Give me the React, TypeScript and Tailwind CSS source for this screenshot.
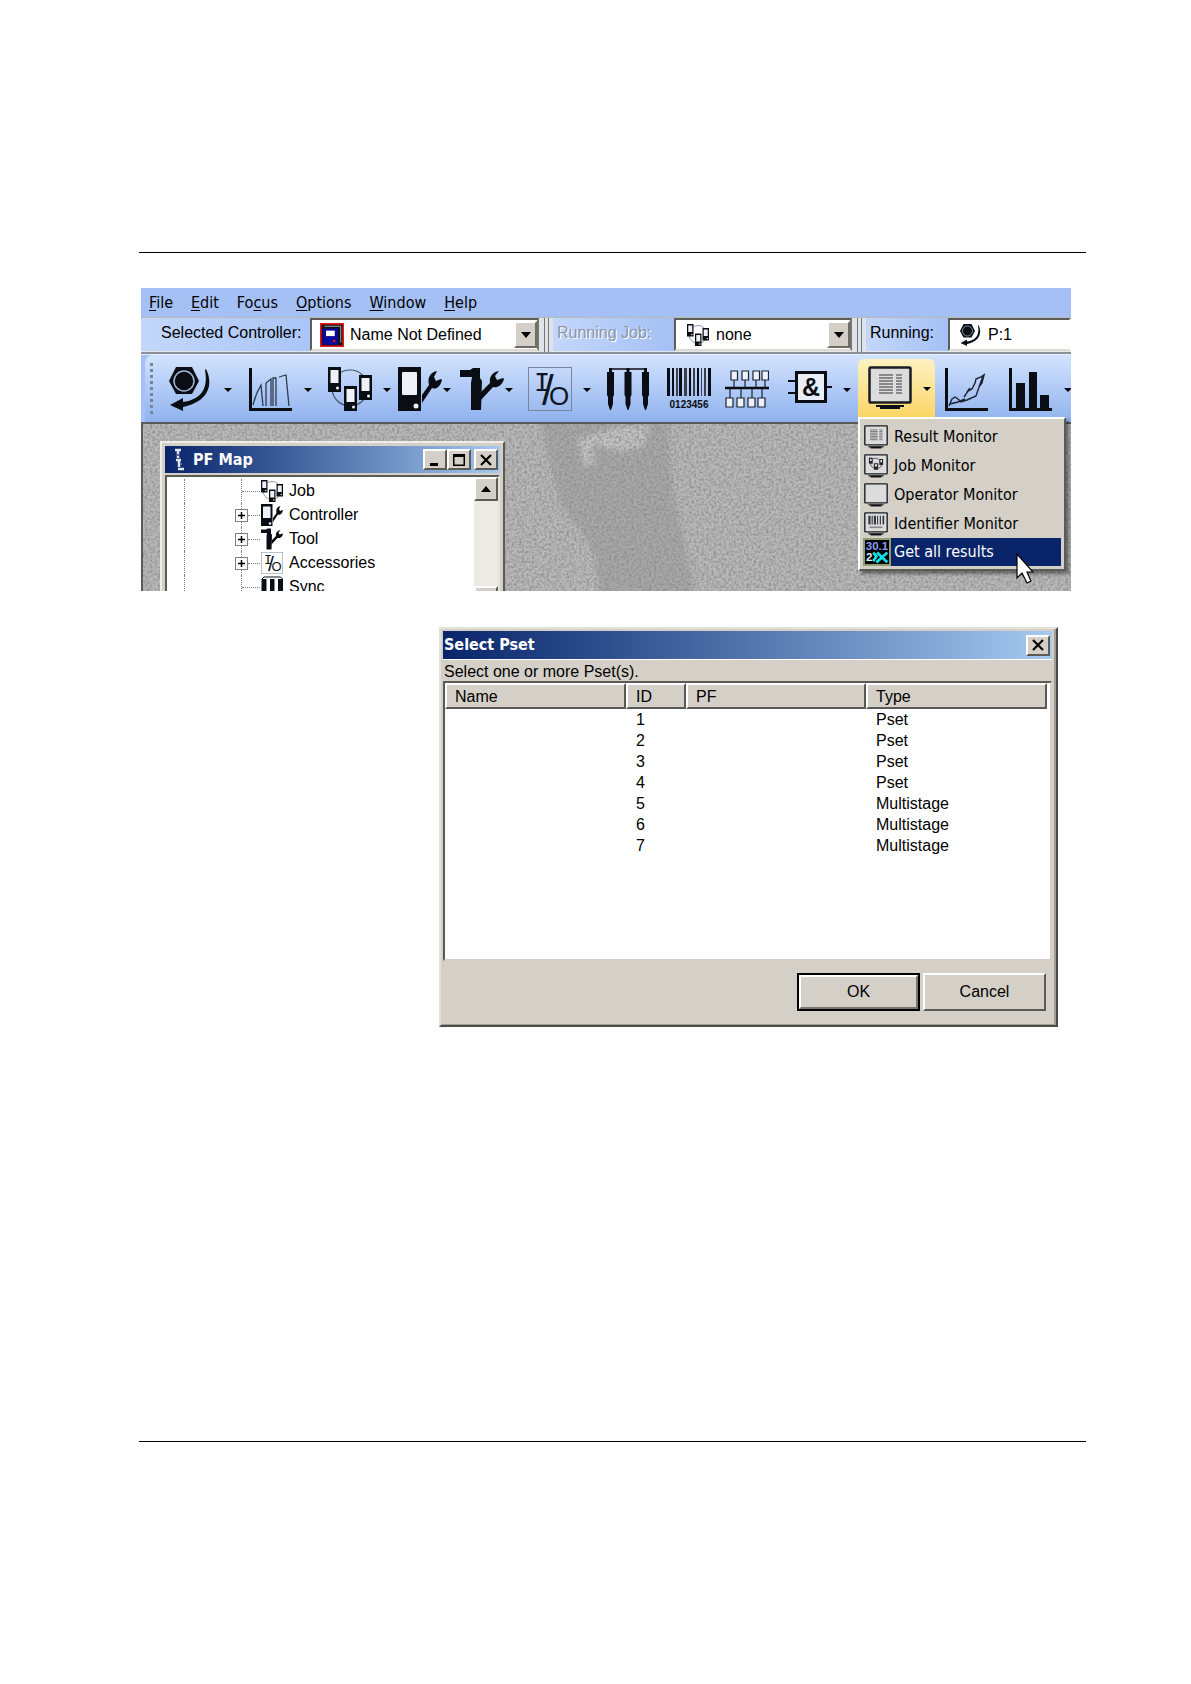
import type { ReactNode } from "react";

const SANS = "font-['Liberation_Sans',Arial,sans-serif]";
const UI = "font-['DejaVu_Sans_Condensed','Noto_Sans',sans-serif]";

interface IconProps {
  className?: string;
}

interface SvgProps extends IconProps {
  children: ReactNode;
}

function Svg({ className = "w-11 h-11", children }: SvgProps) {
  return (
    <svg viewBox="0 0 44 44" className={`shrink-0 ${className}`} aria-hidden="true">
      {children}
    </svg>
  );
}

function NutIcon({ className }: IconProps) {
  return (
    <Svg className={className}>
      <path d="M0 14 7 0h16l7 14-7 13H7z" fill="#0a0e14" />
      <circle cx="15" cy="14" r="10" fill="none" stroke="#9fb4d4" strokeWidth="1.5" />
      <path d="M37 2C45 18 39 35 14 40v4L1 38l13-7v4C34 32 39 20 36 3z" fill="#0a0e14" />
    </Svg>
  );
}

function CurvesIcon({ className }: IconProps) {
  return (
    <Svg className={className}>
      <path d="M1.5 1v41M0 42.500h43" stroke="#0a0e14" strokeWidth="3" fill="none" />
      <path
        d="M4 38C6 30 9 23 12 18l2 21M17 39V16l5-4v27M24 39V11h3v28M30 10l7-2 3 31"
        fill="none"
        stroke="#2d3a50"
        strokeWidth="1.300"
      />
    </Svg>
  );
}

function Device({ x, y }: { x: number; y: number }) {
  return (
    <g transform={`translate(${x} ${y})`}>
      <rect width="13" height="25" fill="#0a0e14" />
      <rect x="2.500" y="3" width="8" height="13" fill="#eef2f8" />
      <circle cx="9.500" cy="21" r="1.500" fill="#eef2f8" />
    </g>
  );
}

function JobIcon({ className }: IconProps) {
  return (
    <Svg className={className}>
      <ellipse cx="22" cy="21" rx="18" ry="18" fill="none" stroke="#46536a" strokeWidth="1.200" />
      <Device x={0} y={0} />
      <Device x={31} y={8} />
      <Device x={16} y={19} />
    </Svg>
  );
}

function ControllerIcon({ className }: IconProps) {
  return (
    <Svg className={className}>
      <rect width="23" height="44" fill="#0a0e14" />
      <rect x="4" y="5" width="15" height="23" rx="1" fill="#eef2f8" />
      <circle cx="18" cy="39" r="2.500" fill="#eef2f8" />
      <path d="M24 28 31 18C29 10 33 5 39 4l-3 6 2 4 5-2 1 1C42 20 38 23 34 21L24 36z" fill="#0a0e14" />
    </Svg>
  );
}

function ToolIcon({ className }: IconProps) {
  return (
    <Svg className={className}>
      <path d="M0 3h10l3-2h7v10l2 3-1 29H11V16l1-6H0z" fill="#0a0e14" />
      <path d="m21 25 9-9C29 9 33 5 39 4l-4 5 2 4 6-2 1 1C42 19 37 21 33 20L21 33z" fill="#0a0e14" />
    </Svg>
  );
}

function IoIcon({ className }: IconProps) {
  return (
    <Svg className={className}>
      <rect x=".5" y=".5" width="43" height="43" fill="none" stroke="#7b8597" />
      <g fill="#101620">
        <text x="6" y="24" fontFamily="Liberation Mono" fontSize="27" textAnchor="start">
          I
        </text>
        <text x="14" y="38" fontFamily="Liberation Sans" fontSize="42">
          /
        </text>
        <text x="31" y="38" fontFamily="Liberation Sans" fontSize="26" textAnchor="middle">
          O
        </text>
      </g>
    </Svg>
  );
}

function SyncIcon({ className }: IconProps) {
  return (
    <Svg className={className}>
      <path d="M4 2h36" stroke="#0a0e14" strokeWidth="1.500" />
      {[0, 17.5, 35].map((x) => (
        <path key={x} d={`M${x + 3} 1h3v4h2v23l-1 2v7l-2 6h-1l-2-6v-7l-1-2V5h2z`} fill="#0a0e14" />
      ))}
    </Svg>
  );
}

function SyncSmallIcon({ className }: IconProps) {
  return (
    <Svg className={className}>
      <path d="M2 44V6l4-4h33l4 4v38" fill="none" stroke="#0a0e14" strokeWidth="2" />
      <path d="M2 6h9v38H2zM18 6h9v38h-9zM34 6h9v38h-9z" fill="#0a0e14" />
    </Svg>
  );
}

function BarcodeIcon({ className }: IconProps) {
  return (
    <Svg className={className}>
      <path d="M0 1h3v28H0zM5 1h2v28H5zM12 1h3v28h-3zM22 1h2v28h-2zM30 1h2v28h-2zM41 1h3v28h-3z" fill="#0a0e14" />
      <path d="M9 1h2v28H9zM17 1h3v28h-3zM26 1h2v28h-2zM34 1h1v28h-1zM37 1h2v28h-2z" fill="#39404c" />
      <text x="22" y="41" textAnchor="middle" fontFamily="Liberation Sans" fontWeight="bold" fontSize="10" fill="#0a0e14">
        0123456
      </text>
    </Svg>
  );
}

function LineIcon({ className }: IconProps) {
  return (
    <Svg className={className}>
      <path d="M0 21h44" stroke="#0a0e14" strokeWidth="2.500" />
      <g fill="#eef2f8" stroke="#1c2430" strokeWidth="1.200">
        {[6, 17, 28, 37].map((x) => (
          <path key={x} d={`M${x} 4h6.500v9H${x}zM${x + 3} 13v8`} />
        ))}
        {[1, 12, 23, 33].map((x) => (
          <path key={x} d={`M${x} 31h7v9H${x}zM${x + 4} 31V22`} />
        ))}
      </g>
    </Svg>
  );
}

function GateIcon({ className }: IconProps) {
  return (
    <Svg className={className}>
      <path d="M0 14h8M0 26h8M38 20h6" stroke="#0a0e14" strokeWidth="2" />
      <rect x="8.500" y="5.500" width="29" height="29" fill="#e9eef6" stroke="#0a0e14" strokeWidth="3" />
      <text x="23" y="29" textAnchor="middle" fontFamily="Liberation Sans" fontWeight="bold" fontSize="25" fill="#0a0e14">
        &amp;
      </text>
    </Svg>
  );
}

function Monitor({ className, children }: { className?: string; children?: ReactNode }) {
  return (
    <Svg className={className}>
      <rect x="1.500" y="1.500" width="41" height="35" rx="1" fill="#dcdcdc" stroke="#1a1d22" strokeWidth="2.500" />
      {children}
      <path d="M8 39h28v2H8z" fill="#0a0e14" />
      <path d="M12 40h20v3H12z" fill="#0a0e14" />
    </Svg>
  );
}

function ResultMonitorIcon({ className }: IconProps) {
  return (
    <Monitor className={className}>
      <path
        d="M11 9h14M11 12h14M11 15h14M11 18h14M11 21h14M11 24h14M11 27h14M28 9h6M28 12h6M28 15h6M28 18h6M28 21h6M28 24h6M28 27h6"
        stroke="#6a6d72"
        strokeWidth="1.600"
      />
    </Monitor>
  );
}

function JobMonitorIcon({ className }: IconProps) {
  return (
    <Monitor className={className}>
      <path d="M9 7h7v11H9zM28 9h7v11h-7zM18 17h8v12h-8z" fill="#22262c" />
      <path d="M11 9h3v4h-3zM30 11h3v4h-3zM20 19h4v4h-4z" fill="#e6e6e6" />
      <path d="M12 18c0 4 2 6 6 7M32 20c0 3-2 5-6 6M16 9c5-2 8-1 12 1" fill="none" stroke="#444" strokeWidth="1.500" />
    </Monitor>
  );
}

function IdentifierMonitorIcon({ className }: IconProps) {
  return (
    <Monitor className={className}>
      <path d="M8 7h4v16H8zM14 7h2v16h-2zM18 7h4v16h-4zM24 7h2v16h-2zM29 7h2v16h-2zM34 7h3v16h-3z" fill="#33373d" />
      <path d="M10 28h24" stroke="#8a8a8a" strokeWidth="3" />
    </Monitor>
  );
}

function GetResultsIcon({ className }: IconProps) {
  return (
    <Svg className={className}>
      <rect width="44" height="44" fill="#000" />
      <g fontFamily="Liberation Sans" fontWeight="bold" fontSize="21">
        <text x="22" y="19" fill="#8f9cff" textAnchor="middle">
          30.1
        </text>
        <text x="2" y="39" fill="#e8ecff">
          2
        </text>
      </g>
      <path d="m15 23 6 7-6 9M22 23l19 18M41 23 21 41" fill="none" stroke="#10e0e8" strokeWidth="5" />
    </Svg>
  );
}

function TraceIcon({ className }: IconProps) {
  return (
    <Svg className={className}>
      <path d="M1.500 1v41M0 42.500h43" stroke="#0a0e14" strokeWidth="3" fill="none" />
      <path
        d="m4 39 3-7 3-2 3 2 3 3 6-2 9-4 3-9 3-4 2-8M19 30l4-6 4-2 3-6 1-4 5-2 4-3M34 20l4-11M22 25l3-4M5 37l8-2 7-3"
        fill="none"
        stroke="#1c2430"
        strokeWidth="1.400"
      />
    </Svg>
  );
}

function BarsIcon({ className }: IconProps) {
  return (
    <Svg className={className}>
      <path d="M1.500 1v41M0 42.500h43" stroke="#0a0e14" strokeWidth="3" fill="none" />
      <path d="M7 16h9v26H7zM20 5h8v37h-8zM31 28h9v14h-9z" fill="#0a0e14" />
    </Svg>
  );
}

function RedDeviceIcon() {
  return (
    <Svg className="w-6 h-6">
      <rect x="1.500" y="1.500" width="41" height="41" fill="#111" stroke="#e3161b" strokeWidth="3" />
      <path d="M8 6h30v30" fill="none" stroke="#bfc3cc" strokeWidth="1.500" />
      <rect x="5" y="10" width="28" height="30" fill="#0a0a9c" />
      <rect x="11" y="14" width="16" height="10" fill="#fff" />
      <circle cx="26" cy="33" r="2.500" fill="#e3161b" />
    </Svg>
  );
}

function Caret({ className }: IconProps) {
  return <span className={`mt-[3px] w-0 h-0 border-x-4 border-x-transparent border-t-4 border-t-black ${className}`} />;
}

const menus = [
  { before: "", key: "F", after: "ile" },
  { before: "", key: "E", after: "dit" },
  { before: "Fo", key: "c", after: "us" },
  { before: "", key: "O", after: "ptions" },
  { before: "", key: "W", after: "indow" },
  { before: "", key: "H", after: "elp" },
];

interface ComboProps {
  id: string;
  value: string;
  icon: ReactNode;
  className: string;
  arrow?: boolean;
}

function Combo({ id, value, icon, className, arrow = true }: ComboProps) {
  return (
    <div
      className={`flex h-[33px] items-center bg-white border-2 border-t-[#5c5c58] border-l-[#5c5c58] border-b-[#dedbd3] pl-2 ${className}`}
    >
      {icon}
      <select id={id} className="appearance-none flex-1 min-w-0 h-full pl-[6px] bg-transparent text-black outline-none">
        <option>{value}</option>
      </select>
      {arrow && (
        <span className="flex w-[23px] h-[27px] shrink-0 items-center justify-center bg-[#d4d0c8] border-2 border-t-white border-l-white border-b-[#6e6b64] border-r-[#6e6b64]">
          <span className="w-0 h-0 border-x-[5px] border-x-transparent border-t-[6px] border-t-black" />
        </span>
      )}
    </div>
  );
}

function Splitter() {
  return (
    <span className="flex h-[34px] w-[14px] shrink-0 justify-center gap-[3px] bg-[#dfe3ea]">
      <span className="w-px bg-[#77756f]" />
      <span className="w-px bg-[#77756f]" />
    </span>
  );
}

interface Tool {
  name: string;
  icon: ReactNode;
  width: string;
  caret?: string;
}

const tools: Tool[] = [
  { name: "Pset", icon: <NutIcon />, width: "w-20", caret: "ml-[11px]" },
  { name: "Curves", icon: <CurvesIcon />, width: "w-[79px]", caret: "ml-[11px]" },
  { name: "Job", icon: <JobIcon />, width: "w-[70px]", caret: "ml-[11px]" },
  { name: "Controller", icon: <ControllerIcon />, width: "w-[62px]", caret: "ml-[1px]" },
  { name: "Tool", icon: <ToolIcon />, width: "w-[68px]", caret: "ml-[1px]" },
  { name: "Accessories", icon: <IoIcon />, width: "w-[78px]", caret: "ml-[11px]" },
  { name: "Sync", icon: <SyncIcon />, width: "w-[61px]" },
  { name: "Identifier", icon: <BarcodeIcon />, width: "w-[58px]" },
  { name: "Line", icon: <LineIcon />, width: "w-[63px]" },
  { name: "Logic", icon: <GateIcon />, width: "w-20", caret: "ml-[11px]" },
];

const statTools: Tool[] = [
  { name: "Trace", icon: <TraceIcon />, width: "w-16" },
  { name: "Statistics", icon: <BarsIcon />, width: "w-[76px]", caret: "ml-[11px]" },
];

function ToolButton({ tool }: { tool: Tool }) {
  return (
    <button type="button" aria-label={tool.name} className={`flex h-full shrink-0 items-center pl-[10px] ${tool.width}`}>
      {tool.icon}
      {tool.caret && <Caret className={tool.caret} />}
    </button>
  );
}

const monitorItems = [
  { label: "Result Monitor", icon: <ResultMonitorIcon className="w-6 h-6" /> },
  { label: "Job Monitor", icon: <JobMonitorIcon className="w-6 h-6" /> },
  { label: "Operator Monitor", icon: <Monitor className="w-6 h-6" /> },
  { label: "Identifier Monitor", icon: <IdentifierMonitorIcon className="w-6 h-6" /> },
];

function MonitorMenu() {
  return (
    <div
      className={`absolute left-0 top-[62px] z-10 w-[208px] py-[3px] px-[3px] bg-[#d4d0c8] border-2 border-t-white border-l-white border-b-[#5c5a55] border-r-[#5c5a55] shadow-[3px_3px_3px_rgba(0,0,0,0.4)] text-[16px] ${UI}`}
    >
      {monitorItems.map((item) => (
        <button key={item.label} type="button" className="flex h-[29px] w-full items-center pl-px gap-[6px] whitespace-nowrap">
          {item.icon}
          {item.label}
        </button>
      ))}
      <button type="button" className="flex h-7 w-full items-center whitespace-nowrap bg-[#0a246a] text-white">
        <span className="flex h-full w-7 shrink-0 items-center justify-center bg-[#8f9f72]">
          <GetResultsIcon className="w-6 h-6" />
        </span>
        <span className="pl-[3px]">Get all results</span>
      </button>
      {/* Mouse pointer */}
      <svg viewBox="0 0 18 32" className="absolute left-[156px] top-[134px] w-[18px] h-8" aria-hidden="true">
        <path d="M1 1v24l5-5 5 10 4-2-4-9h6z" fill="#fff" stroke="#000" strokeWidth="1.200" />
      </svg>
    </div>
  );
}

function TitleButton({ label, children }: { label: string; children: ReactNode }) {
  return (
    <button
      type="button"
      aria-label={label}
      className="flex w-6 h-[21px] items-center justify-center bg-[#d4d0c8] border-2 border-t-white border-l-white border-b-[#5c5a55] border-r-[#5c5a55]"
    >
      <svg viewBox="0 0 16 14" className="w-4 h-[14px]" aria-hidden="true">
        {children}
      </svg>
    </button>
  );
}

function CloseGlyph() {
  return <path d="m3 2 10 10M13 2 3 12" stroke="#000" strokeWidth="2.200" fill="none" />;
}

const tree = [
  { label: "Job", icon: <JobIcon className="w-6 h-[22px]" />, expandable: false },
  { label: "Controller", icon: <ControllerIcon className="w-6 h-[22px]" />, expandable: true },
  { label: "Tool", icon: <ToolIcon className="w-6 h-[22px]" />, expandable: true },
  { label: "Accessories", icon: <IoIcon className="w-6 h-[22px]" />, expandable: true },
  { label: "Sync", icon: <SyncSmallIcon className="w-6 h-[22px]" />, expandable: false },
];

function TreeRow({ row }: { row: (typeof tree)[number] }) {
  return (
    <li className="flex h-6 items-center">
      <span className="w-[18px] h-6 shrink-0 border-r border-dotted border-[#808080]" />
      <span className="flex w-[75px] h-6 shrink-0 items-center">
        <span className="w-[57px] h-full shrink-0 border-r border-dotted border-[#808080]" />
        {row.expandable && (
          <button
            type="button"
            aria-label={`Expand ${row.label}`}
            className="-ml-[7px] flex w-[13px] h-[13px] shrink-0 items-center justify-center border border-[#808080] bg-white"
          >
            <svg viewBox="0 0 9 9" className="w-[9px] h-[9px]" aria-hidden="true">
              <path d="M4.500 1v7M1 4.500h7" stroke="#000" strokeWidth="1.500" />
            </svg>
          </button>
        )}
        <span className="flex-1 border-t border-dotted border-[#808080]" />
      </span>
      {row.icon}
      <span className="pl-[5px]">{row.label}</span>
    </li>
  );
}

function PfMap() {
  return (
    <section className="relative ml-[17px] mt-[17px] w-[345px] h-[170px] p-[3px] bg-[#d4d0c8] border-2 border-t-[#efede8] border-l-[#efede8] border-r-[#5c5a55]">
      <header className="flex h-[27px] items-center pl-2 pr-[2px] bg-linear-to-r from-[#0a246a] to-[#a6caf0]">
        <svg viewBox="0 0 12 24" className="w-3 h-6" aria-hidden="true">
          <path d="M2 2h6M5 3v7M3 12h5M6 13v6M5 21h6" stroke="#dfe3ee" strokeWidth="2.500" fill="none" />
          <path d="M4 6h2v2H4zM7 15h2v2H7z" fill="#6f6690" />
        </svg>
        <h2 className={`flex-1 pl-2 text-[16px] font-bold text-white ${UI}`}>PF Map</h2>
        <TitleButton label="Minimize">
          <path d="M3 10h8v3H3z" />
        </TitleButton>
        <TitleButton label="Maximize">
          <path d="M2 1h12v12H2zM3.500 4v7.500h9V4z" fillRule="evenodd" />
        </TitleButton>
        <span className="w-[3px]" />
        <TitleButton label="Close">
          <CloseGlyph />
        </TitleButton>
      </header>
      <div className="mt-[2px] flex h-[140px] bg-white border-2 border-t-[#5c5a55] border-l-[#5c5a55] border-r-[#e6e3dc]">
        <ul className={`flex-1 pt-[2px] text-[16px] ${SANS}`}>
          {tree.map((row) => (
            <TreeRow key={row.label} row={row} />
          ))}
        </ul>
        <div className="flex w-6 flex-col bg-[#eceae5]">
          <button
            type="button"
            aria-label="Scroll up"
            className="flex h-6 items-center justify-center bg-[#d4d0c8] border-2 border-t-white border-l-white border-b-[#5c5a55] border-r-[#5c5a55]"
          >
            <span className="w-0 h-0 border-x-[5px] border-x-transparent border-b-[6px] border-b-black" />
          </button>
          <span className="mt-[85px] h-6 bg-[#d4d0c8] border-2 border-t-white border-l-white border-r-[#5c5a55]" />
        </div>
      </div>
    </section>
  );
}

function Backdrop() {
  return (
    <svg className="absolute inset-0 w-full h-full" viewBox="0 0 930 169" preserveAspectRatio="xMinYMin slice" aria-hidden="true">
      <filter id="grain" x="0" y="0" width="100%" height="100%">
        <feTurbulence type="fractalNoise" baseFrequency="0.4" numOctaves="2" seed="4" />
        <feColorMatrix values="0 0 0 0 0.250  0 0 0 0 0.250  0 0 0 0 0.250  1.900 0 0 0 -0.700" />
      </filter>
      <filter id="soften">
        <feGaussianBlur stdDeviation="2.500" />
      </filter>
      <rect width="930" height="169" fill="#b9b9b9" />
      <g filter="url(#soften)">
        <path d="M396-8h130l4 68 25 120H455L440 110 418 80z" fill="#a8a8a8" />
        <path d="m436 15 40-12 32-3-6 22-24 6-28-8 3 20-12 2z" fill="#c4c4c4" />
        <path d="m438 105 14 28 6 46h-26z" fill="#bbbbbb" />
      </g>
      <rect width="930" height="169" filter="url(#grain)" />
    </svg>
  );
}

function ToolsNetWindow() {
  return (
    <section className="ml-[2px] mr-[15px] mt-[35px] overflow-hidden">
      <nav className={`flex h-[29px] items-center gap-[18px] pl-2 bg-[#a4c0f5] text-[16px] ${UI}`}>
        {menus.map((menu) => (
          <button key={menu.key} type="button">
            {menu.before}
            <u className="underline-offset-2">{menu.key}</u>
            {menu.after}
          </button>
        ))}
      </nav>

      <div className={`flex h-[37px] bg-[#e4e6ea] border-t border-t-[#b9b8b4] border-b-2 border-b-[#8b8f99] text-[16px] ${SANS}`}>
        <label htmlFor="controller" className="w-[169px] h-[33px] shrink-0 pl-5 leading-[30px] bg-linear-to-r from-[#c3d7fa] to-[#a9c5f7]">
          Selected Controller:
        </label>
        <Combo
          id="controller"
          value="Name Not Defined"
          icon={<RedDeviceIcon />}
          className="w-[229px] shrink-0 border-r-[#77756f]"
        />
        <Splitter />
        <label
          htmlFor="job"
          className="w-[121px] h-[33px] shrink-0 pl-1 leading-[30px] text-[#8d96a8] [text-shadow:1px_1px_0_#fff] bg-linear-to-r from-[#c3d7fa] to-[#a4c0f5]"
        >
          Running Job:
        </label>
        <Combo
          id="job"
          value="none"
          icon={<JobIcon className="w-6 h-[22px] ml-[2px]" />}
          className="w-[178px] shrink-0 border-r-[#77756f]"
        />
        <Splitter />
        <label htmlFor="running" className="w-[82px] h-[33px] shrink-0 pl-1 leading-[30px] bg-linear-to-r from-[#c3d7fa] to-[#a4c0f5]">
          Running:
        </label>
        <Combo
          id="running"
          value="P:1"
          icon={<NutIcon className="w-[22px] h-[22px] ml-[2px]" />}
          className="flex-1 min-w-[123px] border-r-white"
          arrow={false}
        />
      </div>

      <div className="h-[68px] pl-1 bg-[#a4c0f5] border-t border-t-[#e8eefb]">
        <div className="flex h-[67px] rounded-tl-lg bg-linear-to-b from-[#d3e3fd] to-[#8fb2ee]">
          <span className="my-2 ml-[5px] mr-[5px] w-1 shrink-0 border-l-[3px] border-dotted border-[#76849f]" />
          {tools.map((tool) => (
            <ToolButton key={tool.name} tool={tool} />
          ))}
          <div className="relative w-[77px] shrink-0">
            <button
              type="button"
              aria-label="Monitor"
              aria-expanded="true"
              className="mt-1 flex h-[63px] w-full items-center rounded-t-md pl-[10px] pb-[6px] bg-linear-to-b from-[#fdf1c0] to-[#fcd35a]"
            >
              <ResultMonitorIcon />
              <Caret className="ml-[11px]" />
            </button>
            <MonitorMenu />
          </div>
          {statTools.map((tool) => (
            <ToolButton key={tool.name} tool={tool} />
          ))}
        </div>
      </div>

      <div className="relative h-[169px] overflow-hidden border-t-2 border-l-2 border-[#5a5a5a]">
        <Backdrop />
        <PfMap />
      </div>
    </section>
  );
}

const psets = [
  { id: 1, type: "Pset" },
  { id: 2, type: "Pset" },
  { id: 3, type: "Pset" },
  { id: 4, type: "Pset" },
  { id: 5, type: "Multistage" },
  { id: 6, type: "Multistage" },
  { id: 7, type: "Multistage" },
];

const columns = [
  { label: "Name", width: "w-[181px]" },
  { label: "ID", width: "w-[60px]" },
  { label: "PF", width: "w-[180px]" },
  { label: "Type", width: "" },
];

function SelectPset() {
  return (
    <section
      className={`ml-[300px] mr-7 mt-9 bg-[#d4d0c8] border-2 border-t-[#e4e1da] border-l-[#e4e1da] border-b-[#4d4b47] border-r-[#4d4b47] text-[16px] ${SANS}`}
    >
      <div className="pl-[2px] pr-[2px] pt-[2px] pb-[13px] border-r-2 border-b border-[#a09d96]">
        <header className="flex h-7 items-center justify-between pl-px pr-[2px] bg-linear-to-r from-[#0a246a] to-[#a6caf0]">
          <h2 className={`text-[16px] font-bold text-white ${UI}`}>Select Pset</h2>
          <TitleButton label="Close">
            <CloseGlyph />
          </TitleButton>
        </header>
        <p className="h-[22px] pl-px leading-6 border-t border-t-white">Select one or more Pset(s).</p>
        <div className="h-[280px] bg-white border-2 border-t-[#5c5a55] border-l-[#5c5a55] border-b-[#d4d0c8] border-r-[#d4d0c8] pr-[3px]">
          <table className="w-full table-fixed border-separate border-spacing-0 text-left">
            <thead>
              <tr>
                {columns.map((col) => (
                  <th
                    key={col.label}
                    className={`h-[26px] pl-2 pt-[2px] font-normal leading-5 bg-[#d4d0c8] border-2 border-t-white border-l-white border-b-[#5c5a55] border-r-[#5c5a55] ${col.width}`}
                  >
                    {col.label}
                  </th>
                ))}
              </tr>
            </thead>
            <tbody>
              {psets.map((pset) => (
                <tr key={pset.id} className="h-[21px] leading-[21px]">
                  <td />
                  <td className="pl-[10px]">{pset.id}</td>
                  <td />
                  <td className="pl-[10px]">{pset.type}</td>
                </tr>
              ))}
            </tbody>
          </table>
        </div>
        <div className="mt-3 flex justify-end gap-[3px] pr-[6px]">
          <button type="button" className="h-[38px] w-[123px] border-2 border-black bg-[#d4d0c8]">
            <span className="flex h-full items-center justify-center border-2 border-t-white border-l-white border-b-[#77756f] border-r-[#77756f]">
              OK
            </span>
          </button>
          <button
            type="button"
            className="h-[38px] w-[123px] bg-[#d4d0c8] border-2 border-t-white border-l-white border-b-[#5c5a55] border-r-[#5c5a55]"
          >
            Cancel
          </button>
        </div>
      </div>
    </section>
  );
}

export default function App() {
  return (
    <main className="min-h-screen bg-white pl-[139px] pr-[105px] pt-[252px] pb-[242px] text-black">
      <hr className="border-t border-black" />
      <ToolsNetWindow />
      <SelectPset />
      <hr className="mt-[414px] border-t border-black" />
    </main>
  );
}
